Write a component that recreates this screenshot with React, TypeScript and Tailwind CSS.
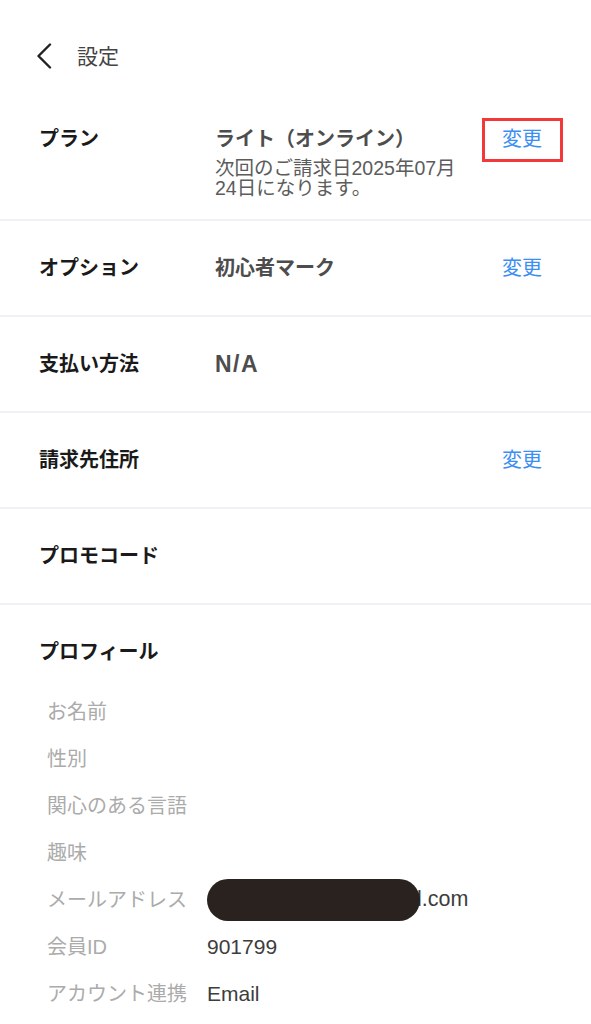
import React from "react";

const Divider = () => <div className="h-[2px] bg-[#f1f1f5]" />;

const Change = () => (
  <span className="text-[20px] leading-[20px] text-[#3b8ef3] shrink-0">変更</span>
);

function Row({ label, value, change, valueClass }: { label: string; value?: string; change?: boolean; valueClass?: string }) {
  return (
    <div className="flex items-center h-[94px] pl-[39px] pr-[49px]">
      <div className="w-[176px] shrink-0 text-[20px] leading-[20px] font-bold text-[#1a1a1a]">{label}</div>
      <div className={"flex-1 leading-[20px] font-bold text-[#4d4d4d] " + (valueClass ?? "text-[20px]")}>{value}</div>
      {change && <Change />}
    </div>
  );
}

function Item({ label, children }: { label: string; children?: React.ReactNode }) {
  return (
    <div className="flex items-center h-[47px] pl-[47px]">
      <div className="w-[160px] shrink-0 text-[20px] leading-[20px] text-[#ababab]">{label}</div>
      <div className="flex items-center text-[21px] leading-[21px] text-[#3d3d3d]">{children}</div>
    </div>
  );
}

export default function App() {
  return (
    <div className="w-[591px] h-[1024px] overflow-hidden bg-white font-['Liberation_Sans','Noto_Sans_CJK_JP',sans-serif]">
      {/* Header */}
      <div className="flex items-center h-[112px] pl-[36px]">
        <svg width="16" height="26" viewBox="0 0 16 26" fill="none">
          <path d="M14 1.5 L2.5 13 L14 24.5" stroke="#222" strokeWidth="2.4" strokeLinecap="round" strokeLinejoin="round" />
        </svg>
        <span className="ml-[25px] text-[21px] leading-[21px] text-[#444]">設定</span>
      </div>

      {/* Plan */}
      <div className="flex items-start pt-[17px] pb-[21px] pl-[39px] pr-[49px]">
        <div className="w-[176px] shrink-0 text-[20px] leading-[20px] font-bold text-[#1a1a1a]">プラン</div>
        <div className="flex-1">
          <div className="text-[20px] leading-[20px] font-bold text-[#4d4d4d]">ライト（オンライン）</div>
          <div className="mt-[9px] text-[19.5px] leading-[20px] text-[#5c5c5c]">
            次回のご請求日2025年07月
            <br />
            24日になります。
          </div>
        </div>
        <span className="relative shrink-0 text-[20px] leading-[20px] text-[#3b8ef3]">
          変更
          <span className="absolute left-[-20px] right-[-21px] top-[-11px] bottom-[-13px] border-[3px] border-[#f23838]" />
        </span>
      </div>
      <Divider />
      <Row label="オプション" value="初心者マーク" change />
      <Divider />
      <Row label="支払い方法" value="N/A" valueClass="text-[23px] tracking-[1.5px]" />
      <Divider />
      <Row label="請求先住所" change />
      <Divider />
      <Row label="プロモコード" />
      <Divider />

      {/* Profile */}
      <div className="pt-[37px]">
        <div className="pl-[39px] text-[20px] leading-[20px] font-bold text-[#1a1a1a]">プロフィール</div>
        <div className="mt-[26px]">
          <Item label="お名前" />
          <Item label="性別" />
          <Item label="関心のある言語" />
          <Item label="趣味" />
          <Item label="メールアドレス">
            <span className="relative z-10 block w-[213px] h-[42px] rounded-full bg-[#2a221f] mr-[-3px]" />
            <span className="text-[21.5px]">l.com</span>
          </Item>
          <Item label="会員ID">901799</Item>
          <Item label="アカウント連携">Email</Item>
        </div>
      </div>
    </div>
  );
}
